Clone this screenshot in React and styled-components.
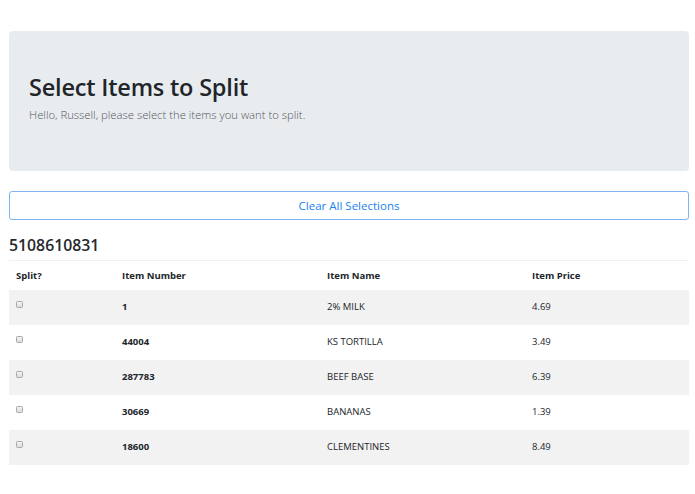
import React from "react";
import styled, { createGlobalStyle } from "styled-components";

const Global = createGlobalStyle`
  html, body { margin: 0; padding: 0; background: #fff; }
  body {
    font-family: "Open Sans", "Noto Sans", "Liberation Sans", sans-serif;
    color: #212529;
    font-size: 10px;
  }
  * { box-sizing: border-box; }
`;

const Page = styled.div`
  padding: 31px 6px 0 9px;
`;

const Jumbotron = styled.section`
  background: #e9ecef;
  border-radius: 4px;
  height: 140px;
  padding: 41px 20px 0 20px;
`;

const Title = styled.h1`
  margin: 0 0 4px 0;
  font-size: 23.5px;
  font-weight: 600;
  line-height: 30px;
  letter-spacing: -0.2px;
  color: #212529;
`;

const Lead = styled.p`
  margin: 0;
  font-size: 11.3px;
  font-weight: 300;
  line-height: 18px;
  color: #50575e;
`;

const OutlineButton = styled.button`
  display: block;
  width: 100%;
  height: 29px;
  margin-top: 20px;
  border: 1px solid #7fb5ee;
  border-radius: 3px;
  background: #fff;
  color: #1a82f0;
  font-family: inherit;
  font-size: 11.5px;
  line-height: 16px;
  padding: 0;
  cursor: pointer;
`;

const Receipt = styled.h4`
  margin: 16px 0 5px 0;
  font-size: 15.8px;
  font-weight: 600;
  line-height: 19px;
  color: #25292d;
`;

const Table = styled.table`
  width: 100%;
  border-collapse: collapse;
  table-layout: fixed;
  border-top: 1px solid #eef0f2;
`;

const Col = styled.col`
  width: ${(p) => p.$w}px;
`;

const HeadCell = styled.th`
  text-align: left;
  font-weight: 700;
  font-size: 9.5px;
  line-height: 15px;
  height: 29px;
  padding: 7px 7px 7px 7px;
  color: #212529;
`;

const Row = styled.tr`
  background: ${(p) => (p.$striped ? "#f2f2f2" : "#fff")};
`;

const Cell = styled.td`
  vertical-align: top;
  font-size: 9.5px;
  line-height: 15px;
  height: 35px;
  padding: 9px 7px 11px 7px;
  font-weight: ${(p) => (p.$bold ? 700 : 400)};
  color: #212529;
`;

const Check = styled.input.attrs({ type: "checkbox" })`
  appearance: none;
  -webkit-appearance: none;
  display: block;
  width: 7px;
  height: 7px;
  margin: 2px 0 0 0;
  border: 1px solid #a9a9a9;
  border-radius: 1.5px;
  background: linear-gradient(#f4f4f4, #dcdcdc);
`;

const items = [
  { num: "1", name: "2% MILK", price: "4.69" },
  { num: "44004", name: "KS TORTILLA", price: "3.49" },
  { num: "287783", name: "BEEF BASE", price: "6.39" },
  { num: "30669", name: "BANANAS", price: "1.39" },
  { num: "18600", name: "CLEMENTINES", price: "8.49" },
];

export default function App() {
  return (
    <>
      <Global />
      <Page>
        <Jumbotron>
          <Title>Select Items to Split</Title>
          <Lead>Hello, Russell, please select the items you want to split.</Lead>
        </Jumbotron>
        <OutlineButton>Clear All Selections</OutlineButton>
        <Receipt>5108610831</Receipt>
        <Table>
          <colgroup>
            <Col $w={106} />
            <Col $w={205} />
            <Col $w={205} />
            <Col $w={164} />
          </colgroup>
          <thead>
            <tr>
              <HeadCell>Split?</HeadCell>
              <HeadCell>Item Number</HeadCell>
              <HeadCell>Item Name</HeadCell>
              <HeadCell>Item Price</HeadCell>
            </tr>
          </thead>
          <tbody>
            {items.map((it, i) => (
              <Row key={it.num} $striped={i % 2 === 0}>
                <Cell>
                  <Check />
                </Cell>
                <Cell $bold>{it.num}</Cell>
                <Cell>{it.name}</Cell>
                <Cell>{it.price}</Cell>
              </Row>
            ))}
          </tbody>
        </Table>
      </Page>
    </>
  );
}
